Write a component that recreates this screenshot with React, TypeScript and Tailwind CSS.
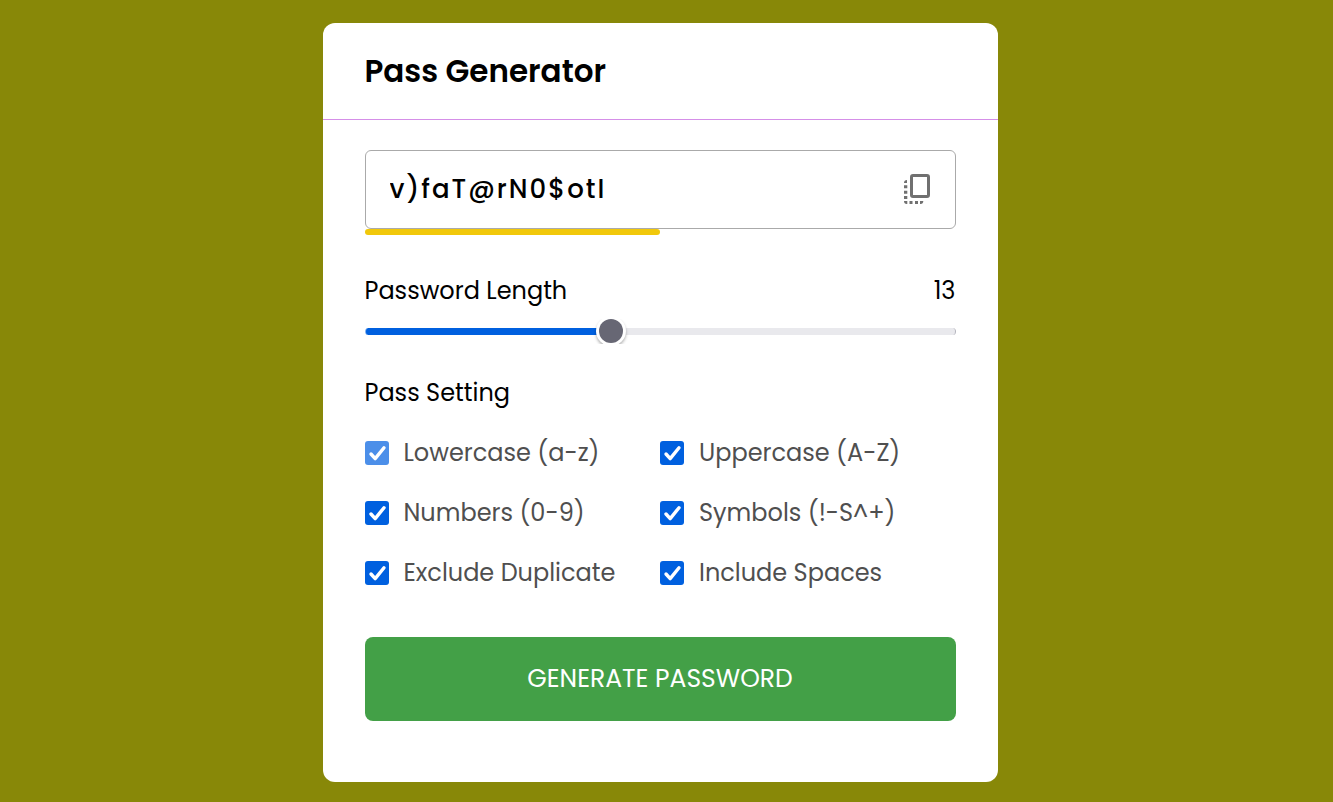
import { useState } from "react";

const OPTIONS = [
  { id: "lowercase", label: "Lowercase (a-z)", locked: true },
  { id: "uppercase", label: "Uppercase (A-Z)", locked: false },
  { id: "numbers", label: "Numbers (0-9)", locked: false },
  { id: "symbols", label: "Symbols (!-S^+)", locked: false },
  { id: "exc-duplicate", label: "Exclude Duplicate", locked: false },
  { id: "spaces", label: "Include Spaces", locked: false },
];

const SETS: Record<string, string> = {
  lowercase: "abcdefghijklmnopqrstuvwxyz",
  uppercase: "ABCDEFGHIJKLMNOPQRSTUVWXYZ",
  numbers: "0123456789",
  symbols: "^!$%&|[](){}:;.,*+-#@<>~",
  spaces: " ",
};

const MIN = 1;
const MAX = 30;

function makePassword(length: number, enabled: Record<string, boolean>) {
  const pool = Object.keys(SETS)
    .filter((key) => enabled[key])
    .map((key) => SETS[key])
    .join("");
  let result = "";
  while (result.length < length) {
    const next = pool[Math.floor(Math.random() * pool.length)];
    const unique = enabled["exc-duplicate"] && result.length < pool.length;
    if (unique && result.includes(next)) continue;
    result += next;
  }
  return result;
}

function CopyIcon() {
  return (
    <svg width="30" height="32" viewBox="0 1 30 32" fill="none" stroke="#707070" aria-hidden="true">
      <rect x="8.5" y="2.5" width="17" height="21" rx="1.5" strokeWidth="3" />
      <path
        d="M1 10a3 3 0 0 1 3-3v3zM1 12.300h3.300v3H1zM1 17.700h3.300v3H1zM1 23h3.300v3H1zM1 28h3.300v3a3 3 0 0 1-3.300-3zM6.500 28h3v3h-3zM12 28h3v3h-3zM17 28h3.300a3 3 0 0 1-3.300 3z"
        fill="#707070"
        stroke="none"
      />
    </svg>
  );
}

function LengthSlider({ value, onChange }: { value: number; onChange: (v: number) => void }) {
  const ratio = (value - MIN) / (MAX - MIN);
  const stop = `calc(12px + (100% - 24px) * ${ratio})`;
  return (
    <input
      id="length"
      type="range"
      min={MIN}
      max={MAX}
      value={value}
      onChange={(e) => onChange(Number(e.target.value))}
      style={{ ["--stop" as string]: stop }}
      className="block h-[25px] w-full cursor-pointer appearance-none overflow-x-visible overflow-y-clip bg-transparent [&::-webkit-slider-runnable-track]:h-[7px] [&::-webkit-slider-runnable-track]:rounded-full [&::-webkit-slider-runnable-track]:border-x [&::-webkit-slider-runnable-track]:border-l-[#7fb0f0] [&::-webkit-slider-runnable-track]:border-r-[#b4b4bd] [&::-webkit-slider-runnable-track]:bg-[linear-gradient(to_right,#0060df_var(--stop),#e9e9ed_var(--stop))] [&::-webkit-slider-thumb]:-mt-[9px] [&::-webkit-slider-thumb]:size-6 [&::-webkit-slider-thumb]:appearance-none [&::-webkit-slider-thumb]:rounded-full [&::-webkit-slider-thumb]:bg-[#676774] [&::-webkit-slider-thumb]:shadow-[0_0_0_3px_#fff,0_2px_3px_3px_rgba(0,0,0,0.3)]"
    />
  );
}

export default function App() {
  const [length, setLength] = useState(13);
  const [password, setPassword] = useState("v)faT@rN0$otI");
  const [enabled, setEnabled] = useState<Record<string, boolean>>(
    Object.fromEntries(OPTIONS.map((o) => [o.id, true]))
  );

  return (
    <main className="flex min-h-screen items-start justify-center bg-[#888808] px-4 pt-[23px] pb-5 font-['Poppins','Inter',sans-serif] text-2xl text-black">
      <section className="mr-[13px] w-full max-w-[675px] rounded-xl bg-white pb-[61px]">
        <h1 className="border-b border-[#d58fe8] px-[42px] py-6 text-[31px] leading-[48px] font-semibold">Pass Generator</h1>
        <div className="px-[42px] pt-[30px]">
          <div className="flex h-[79px] items-center justify-between rounded-md border border-[#aaa] pr-[22px] pl-6">
            <input
              type="text"
              readOnly
              aria-label="Generated password"
              value={password}
              className="w-full min-w-0 bg-transparent text-[26px] font-medium tracking-[2px] outline-none"
            />
            <button type="button" aria-label="Copy password" onClick={() => navigator.clipboard?.writeText(password)} className="shrink-0 cursor-pointer">
              <CopyIcon />
            </button>
          </div>
          <div className="h-1.5 w-1/2 rounded-full bg-[#f1c80b]" />

          <div className="mt-[38px] flex items-center justify-between leading-9">
            <label htmlFor="length">Password Length</label>
            <output htmlFor="length">{length}</output>
          </div>
          <div className="mt-2.5">
            <LengthSlider value={length} onChange={setLength} />
          </div>

          <fieldset className="mt-[31px]">
            <legend className="leading-9">Pass Setting</legend>
            <ul className="mt-6 grid grid-cols-2 gap-y-6">
              {OPTIONS.map((o) => (
                <li key={o.id} className="flex h-9 items-center gap-[15px]">
                  <span className="grid size-6 shrink-0">
                    <input
                      id={o.id}
                      type="checkbox"
                      disabled={o.locked}
                      checked={enabled[o.id]}
                      onChange={(e) => setEnabled({ ...enabled, [o.id]: e.target.checked })}
                      className="peer col-start-1 row-start-1 size-6 cursor-pointer appearance-none rounded-[3px] border-2 border-[#8f8f9d] bg-white checked:border-0 checked:bg-[#0060df] disabled:cursor-default disabled:opacity-70"
                    />
                    <svg viewBox="0 0 24 24" className="pointer-events-none invisible relative col-start-1 row-start-1 size-6 peer-checked:visible" fill="none" stroke="#fff" strokeWidth="3.4" strokeLinecap="round" strokeLinejoin="round" aria-hidden="true">
                      <path d="M6 13l4.200 4.600L19 6.700" />
                    </svg>
                  </span>
                  <label htmlFor={o.id} className="whitespace-nowrap text-[#4f4f4f]">{o.label}</label>
                </li>
              ))}
            </ul>
          </fieldset>

          <button
            type="button"
            onClick={() => setPassword(makePassword(length, enabled))}
            className="mt-[46px] h-[84px] w-full cursor-pointer rounded-lg bg-[#43a047] text-[25px] text-white uppercase"
          >
            Generate Password
          </button>
        </div>
      </section>
    </main>
  );
}
